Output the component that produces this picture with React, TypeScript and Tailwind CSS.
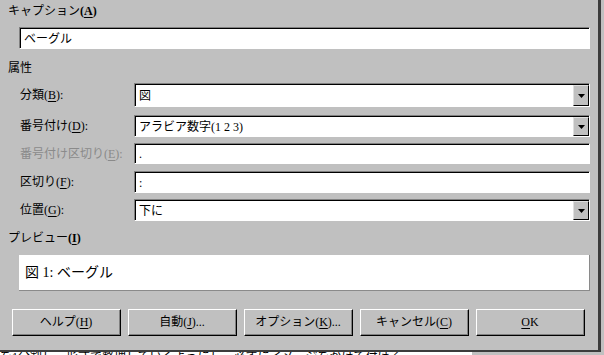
import * as React from "react";

const FONT = { fontFamily: '"Liberation Serif", "Noto Sans CJK JP", serif' };

const Key = ({ k, bold = false }: { k: string; bold?: boolean }) => (
  <span className={bold ? "font-bold" : ""}>
    (<span className="underline underline-offset-2">{k}</span>)
  </span>
);

const Field = ({ value, dropdown = false, h = "h-[22px]" }: { value: string; dropdown?: boolean; h?: string }) => (
  <div className={`flex-1 ${h} border border-t-[#808080] border-l-[#808080] border-b-white border-r-white flex`}>
    <div className="flex-1 flex items-center bg-white border-t border-l border-black pl-[3px] text-[12px] text-black">
      <span className="flex-1 truncate">{value}</span>
      {dropdown && (
        <div className="w-[16px] h-full bg-[#c0c0c0] border border-t-[#dfdfdf] border-l-[#dfdfdf] border-b-black border-r-black flex items-center justify-center">
          <svg width="7" height="4" viewBox="0 0 7 4">
            <path d="M0 0h7L3.5 4z" fill="#000" />
          </svg>
        </div>
      )}
    </div>
  </div>
);

const Row = ({ label, k, value, dropdown, disabled, h, className = "" }: {
  label: string; k: string; value: string; dropdown?: boolean; disabled?: boolean; h?: string; className?: string;
}) => (
  <div className={`flex items-center ${className}`}>
    <div className={`w-[126px] pl-[12px] text-[12px] whitespace-nowrap ${disabled ? "text-[#8a8a8a]" : "text-black"}`}>
      {label}<Key k={k} />:
    </div>
    <Field value={value} dropdown={dropdown} h={h} />
  </div>
);

const Button = ({ children }: { children: React.ReactNode }) => (
  <button className="w-[109px] h-[27px] border border-t-white border-l-white border-b-black border-r-black bg-[#c0c0c0] flex">
    <span className="flex-1 flex items-center justify-center border-b border-r border-[#808080] text-[12px] text-black whitespace-nowrap">
      {children}
    </span>
  </button>
);

export default function App() {
  return (
    <div className="w-[604px] h-[355px] bg-[#c0c0c0] overflow-hidden flex flex-col" style={FONT}>
      <div className="w-[601px] h-[352px] border-r-[3px] border-b-[2px] border-[#3c3c3c] flex flex-col pl-[8px] pr-[8px] pt-[3px]">
        <div className="h-[17px] text-[12px] leading-[17px] text-black">
          キャプション<Key k="A" bold />
        </div>
        <div className="mt-[7px] ml-[11px] flex">
          <Field value="ベーグル" h="h-[22px]" />
        </div>

        <div className="mt-[11px] h-[17px] text-[12px] leading-[17px] text-black">属性</div>
        <Row className="mt-[6px]" label="分類" k="B" value="図" dropdown h="h-[24px]" />
        <Row className="mt-[8px]" label="番号付け" k="D" value="アラビア数字(1 2 3)" dropdown />
        <Row className="mt-[6px]" label="番号付け区切り" k="E" value="." disabled h="h-[21px]" />
        <Row className="mt-[7px]" label="区切り" k="F" value=":" />
        <Row className="mt-[6px]" label="位置" k="G" value="下に" dropdown />

        <div className="mt-[9px] h-[17px] text-[12px] leading-[17px] text-black">
          プレビュー<Key k="I" bold />
        </div>
        <div className="mt-[8px] ml-[11px] h-[36px] bg-white border-b border-r border-[#8a8a8a] flex items-center pl-[6px] text-[14px] text-black">
          図 1: ベーグル
        </div>

        <div className="mt-[18px] ml-[4px] flex gap-[7px]">
          <Button>ヘルプ<Key k="H" /></Button>
          <Button>自動<Key k="J" />...</Button>
          <Button>オプション<Key k="K" />...</Button>
          <Button>キャンセル<Key k="C" /></Button>
          <Button><span className="underline underline-offset-2">O</span>K</Button>
        </div>
      </div>
      <div className="w-[472px] h-[3px] bg-white overflow-hidden">
        <div className="text-[12px] leading-[12px] text-black whitespace-nowrap -mt-[1px]">
          を1分割し、形式で整理していくようにし、必ずにイメージをかけて付ける
        </div>
      </div>
    </div>
  );
}
